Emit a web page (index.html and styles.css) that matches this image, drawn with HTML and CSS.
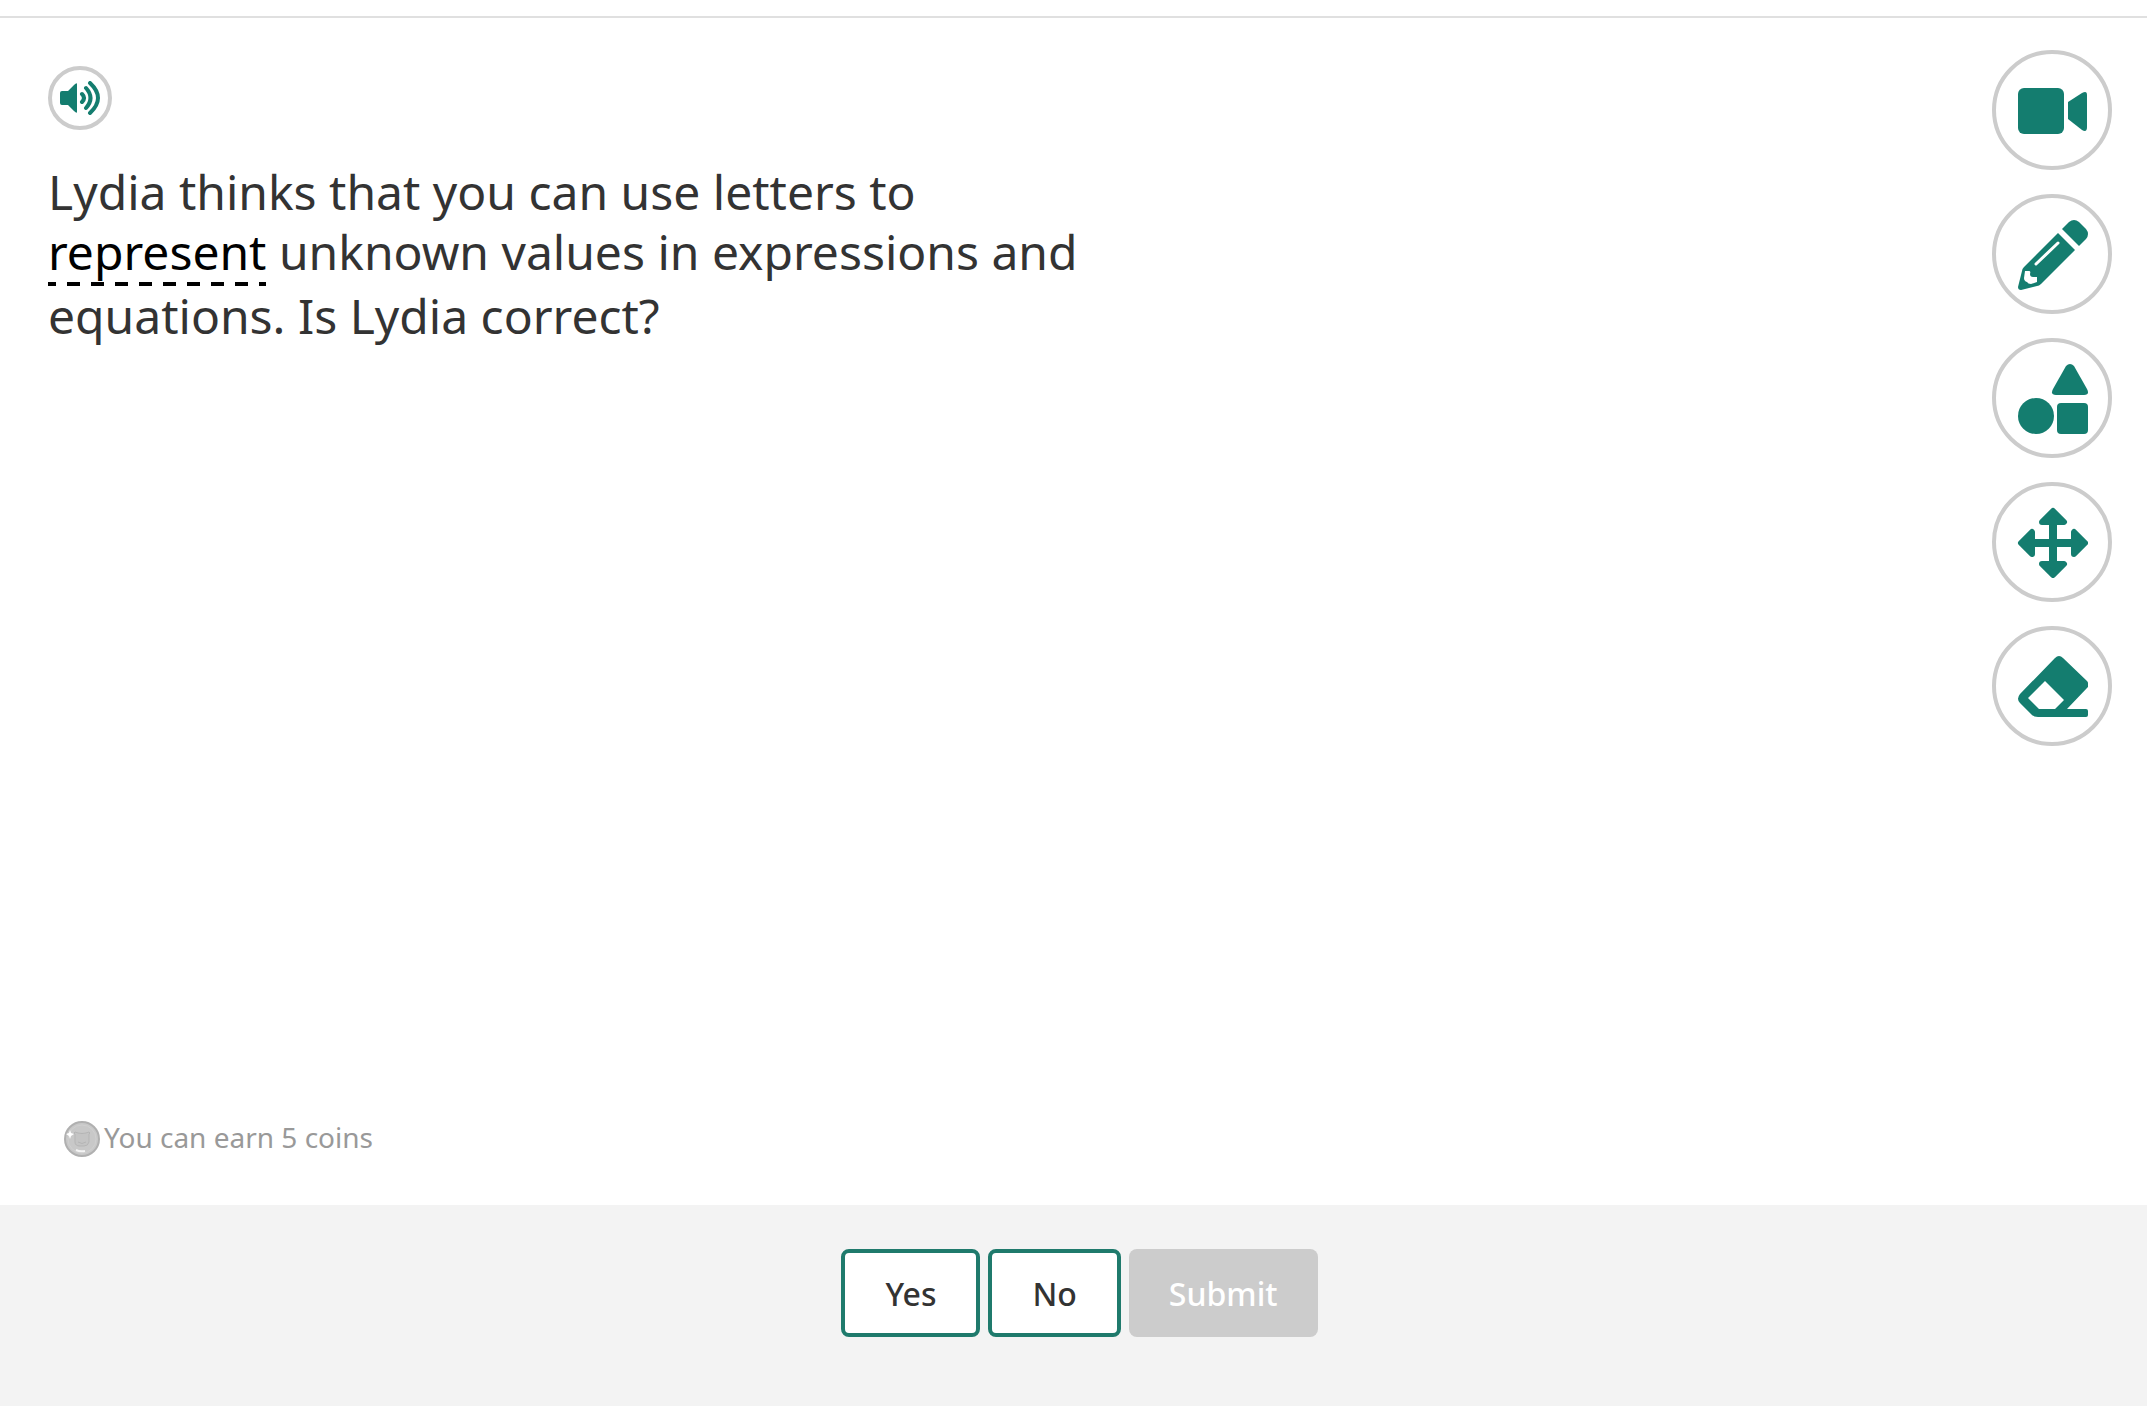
FILE: index.html
```html
<!DOCTYPE html>
<html lang="en">
<head>
	<meta charset="UTF-8">
	<meta name="viewport" content="width=device-width, initial-scale=1">
	<title>Is Lydia correct?</title>
	<link rel="stylesheet" href="styles.css">
</head>
<body>

<main class="main">
	<div class="content">
		<div class="question">
			<button type="button" class="round speaker" aria-label="Read aloud">
				<svg width="40" height="34" viewBox="0 0 40 34">
					<path class="fill" d="M2 10h6l6-6q3-3 3-1v28q0 2-3-1l-6-6H2q-2 0-2-2V12q0-2 2-2z"/>
					<path class="wave" d="M22 13q4 4 0 8M26 7q9 10 0 20M30 2q16 15 0 30"/>
				</svg>
			</button>
			<p class="text">Lydia thinks that you can use letters to <span class="word">represent</span> unknown values in expressions and equations. Is Lydia correct?</p>
		</div>
		<p class="coins">
			<svg width="36" height="36" viewBox="0 0 36 36">
				<circle cx="18" cy="18" r="17" fill="#c8c8c8" stroke="#b0b0b0" stroke-width="2"/>
				<circle cx="18" cy="18" r="14" fill="none" stroke="#d0d0d0"/>
				<path d="M11 13q-2-1 0-2l3 1q4 1 8 0l3-1q2 1 0 2v8q-1 4-5 4h-4q-5 0-5-4z" fill="#c4c4c4" stroke="#b5b5b5"/>
				<path d="M14 21q4 3 8 0" fill="none" stroke="#b5b5b5"/>
				<path d="M12 29q4 2 9 1" fill="none" stroke="#f4f4f4" stroke-width="2"/>
				<path d="M6 9l1 3 3 1-3 2-1 3-1-3-3-2 3-1z" fill="#fff"/>
			</svg>
			<span>You can earn 5 coins</span>
		</p>
	</div>
	<div class="tools">
		<button type="button" class="round tool" aria-label="Video">
			<svg width="72" height="72" viewBox="0 0 72 72">
				<rect class="fill" x="2" y="14" width="46" height="46" rx="6"/>
				<path class="fill" d="M52 28l14-9q5-3 5 2v32q0 6-5 3l-14-11z"/>
			</svg>
		</button>
		<button type="button" class="round tool" aria-label="Pencil">
			<svg width="72" height="72" viewBox="0 0 72 72">
				<path class="fill" d="M46 11l7-7q5-4 10 0l7 7q4 5 0 10l-7 7z"/>
				<path class="fill" d="M42 15L59 32 25 66q-2 2-4 2L5 72q-3 0-3-3L6 53q0-2 2-4z"/>
				<path d="M20 46l22-21" fill="none" stroke="#fff" stroke-width="3" stroke-linecap="round"/>
				<path d="M9 53h4q2 0 1 3 0 3 3 3h4v5l-6 2q-3 0-4-2-3-1-3-4z" fill="#fff"/>
			</svg>
		</button>
		<button type="button" class="round tool" aria-label="Shapes">
			<svg width="72" height="72" viewBox="0 0 72 72">
				<path class="fill" d="M50 4q4-4 8 0l13 23q3 6-3 6H40q-6 0-3-6z"/>
				<circle class="fill" cx="20" cy="54" r="18"/>
				<rect class="fill" x="41" y="41" width="31" height="31" rx="4"/>
			</svg>
		</button>
		<button type="button" class="round tool" aria-label="Move">
			<svg width="72" height="72" viewBox="0 0 72 72">
				<path class="arrow" d="M37 12v50M12 37h50"/>
				<path class="head" d="M37 5l11 11H26zM37 69l11-11H26zM5 37l11-11v22zM69 37l-11-11v22z"/>
			</svg>
		</button>
		<button type="button" class="round tool" aria-label="Eraser">
			<svg width="72" height="72" viewBox="0 0 72 72">
				<path class="fill" fill-rule="evenodd" d="M39 8q4-4 8 0l24 23q3 4 0 7L51 59h19q2 0 2 2v4q0 2-2 2H22q-4 0-6-2L4 53q-4-4 0-9zM29 31L12 48l11 11h16l9-9z"/>
			</svg>
		</button>
	</div>
</main>

<footer class="answers">
	<button type="button" class="btn">Yes</button>
	<button type="button" class="btn">No</button>
	<button type="submit" class="btn submit" disabled>Submit</button>
</footer>

</body>
</html>
```
FILE: styles.css
```css
* {
	box-sizing: border-box;
}
body, p {
	margin: 0;
	padding: 0;
}
body {
	display: flex;
	flex-direction: column;
	min-height: 100vh;
	padding-top: 16px;
	background-color: #fff;
	color: #333;
	font-family: "Noto Sans", "Open Sans", sans-serif;
}
button {
	font-family: inherit;
	cursor: pointer;
}
.main {
	flex: 1;
	display: flex;
	justify-content: space-between;
	border-top: 2px solid #e0e0e0;
	padding: 32px 35px 48px 48px;
}
.content {
	display: flex;
	flex-direction: column;
	justify-content: space-between;
	width: 52%;
	padding-top: 16px;
}
.round {
	display: flex;
	align-items: center;
	justify-content: center;
	border: 4px solid #ccc;
	border-radius: 50%;
	background-color: #fff;
	padding: 0;
}
.speaker {
	width: 64px;
	height: 64px;
}
.tool {
	width: 120px;
	height: 120px;
}
.tools {
	display: flex;
	flex-direction: column;
	gap: 24px;
}
.fill {
	fill: #147d6f;
}
.wave {
	fill: none;
	stroke: #147d6f;
	stroke-width: 4;
	stroke-linecap: round;
}
.arrow {
	fill: none;
	stroke: #147d6f;
	stroke-width: 8;
}
.head {
	fill: #147d6f;
	stroke: #147d6f;
	stroke-width: 6;
	stroke-linejoin: round;
}
.text {
	margin-top: 32px;
	font-size: 48px;
	line-height: 60px;
}
.word {
	display: inline-block;
	padding-bottom: 4px;
	color: #000;
	background: repeating-linear-gradient(to right, #000 0 8px, transparent 8px 19px, #000 19px 24px) left bottom / 100% 4px no-repeat;
}
.coins {
	display: flex;
	align-items: flex-start;
	gap: 4px;
	padding-left: 16px;
	color: #999;
	font-size: 28px;
	line-height: 32px;
}
.answers {
	display: flex;
	justify-content: center;
	gap: 8px;
	padding: 44px 0 69px 12px;
	background-color: #f3f3f3;
}
.btn {
	height: 88px;
	padding: 0 40px;
	border: 4px solid #1f7a6c;
	border-radius: 8px;
	background-color: #fff;
	color: #333;
	font-size: 32px;
	font-weight: 500;
}
.submit {
	border: none;
	background-color: #ccc;
	color: #fff;
	cursor: default;
}
```
